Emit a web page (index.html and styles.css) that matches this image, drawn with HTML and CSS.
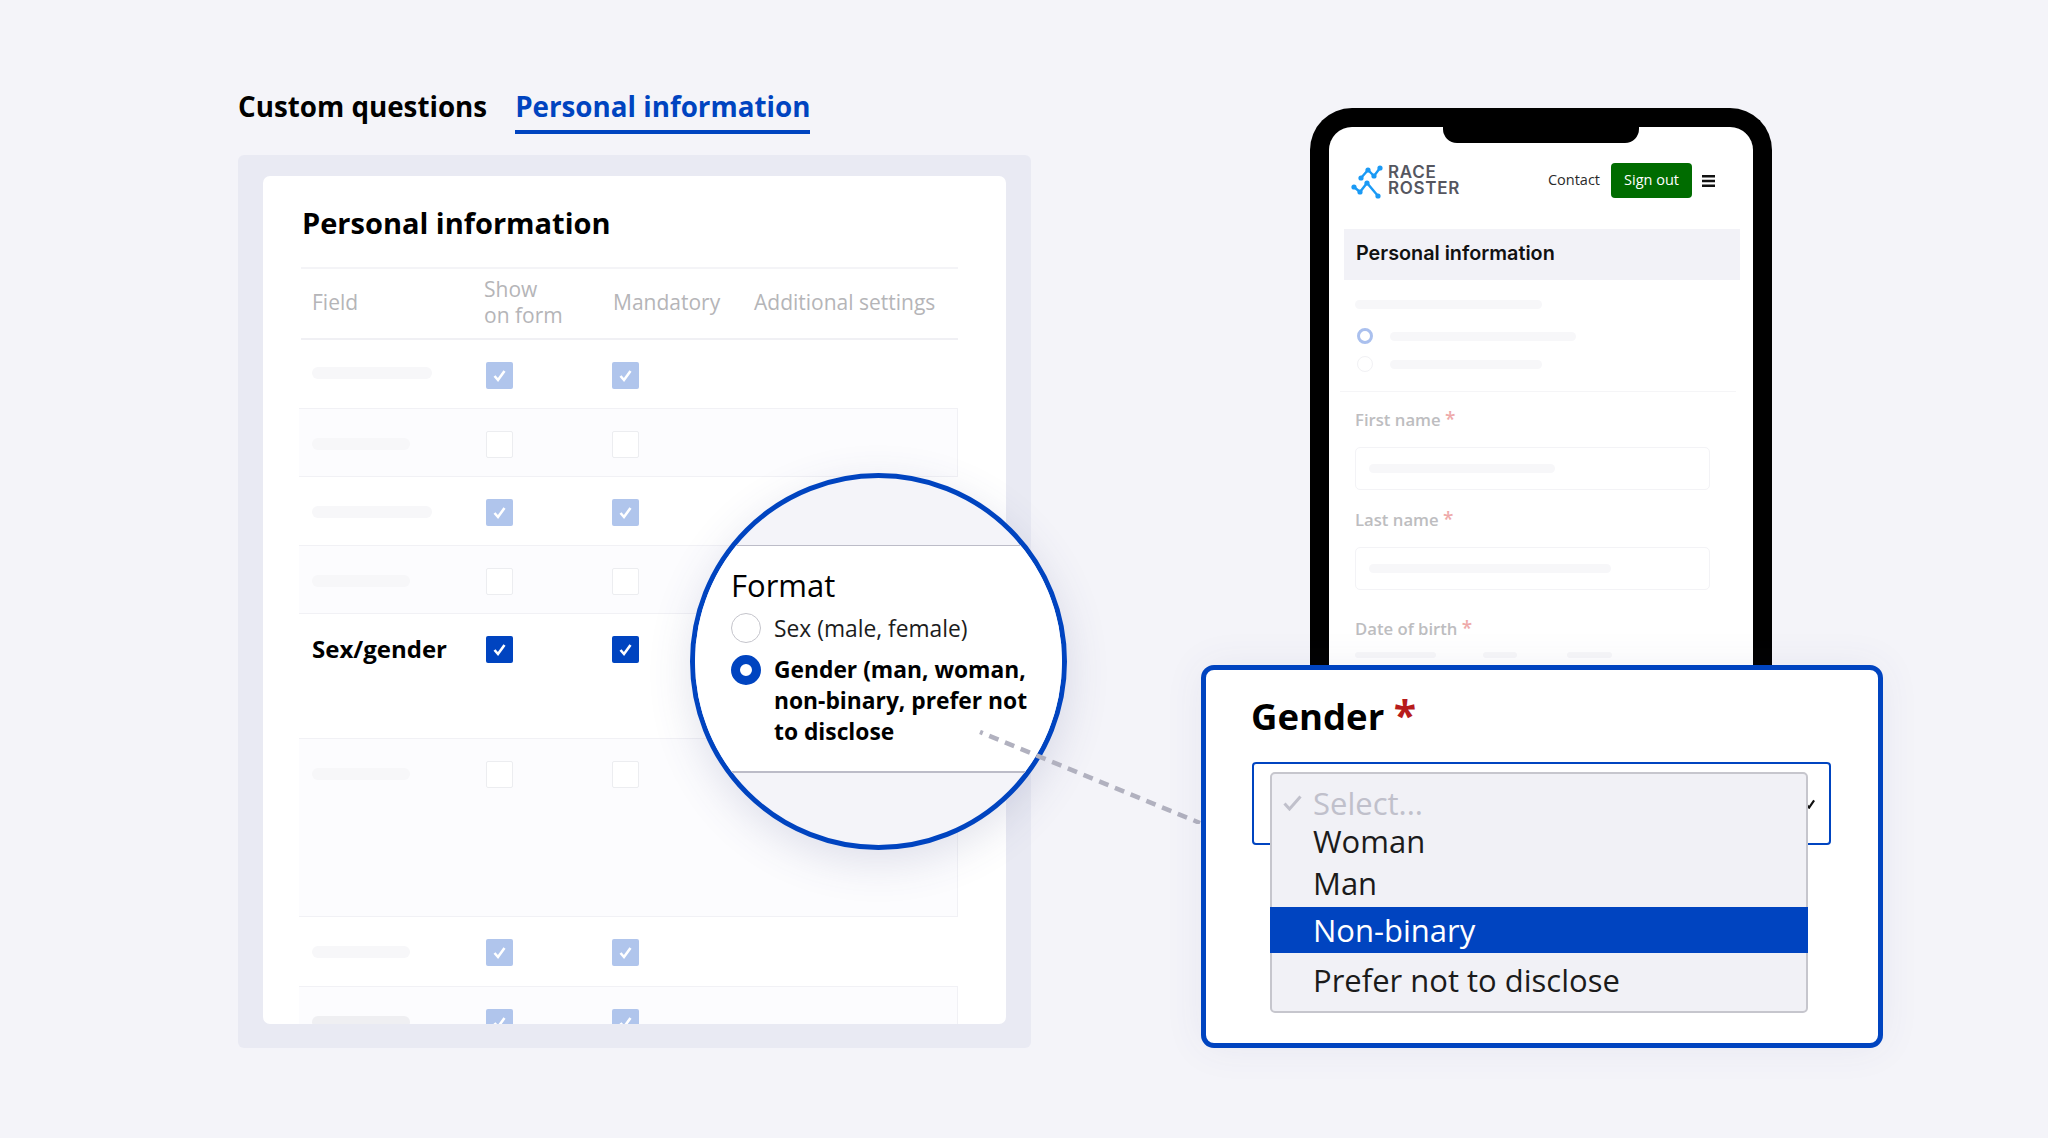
FILE: index.html
```html
<!DOCTYPE html>
<html lang="en">
<head>
    <meta charset="UTF-8">
    <title>Personal information</title>
    <link rel="stylesheet" href="styles.css">
</head>
<body>
    <div class="page">
        <!-- Left column: admin settings -->
        <div class="admin">
            <div class="tabs">
                <a class="tab">Custom questions</a>
                <a class="tab tab-active">Personal information</a>
            </div>
            <div class="panel">
                <div class="card">
                    <h2 class="card-title">Personal information</h2>
                    <div class="table">
                        <div class="head">
                            <span>Field</span>
                            <span>Show<br>on form</span>
                            <span>Mandatory</span>
                            <span>Additional settings</span>
                        </div>
                        <div class="row row-first">
                            <div class="skel skel-long skel-up"></div>
                            <span class="box box-faded"><svg viewBox="0 0 27 27"><path d="M8.5 14l3.5 4 6.5-9"/></svg></span>
                            <span class="box box-faded"><svg viewBox="0 0 27 27"><path d="M8.5 14l3.5 4 6.5-9"/></svg></span>
                        </div>
                        <div class="row row-shaded">
                            <div class="skel skel-short"></div>
                            <span class="box"></span>
                            <span class="box"></span>
                        </div>
                        <div class="row">
                            <div class="skel skel-long"></div>
                            <span class="box box-faded"><svg viewBox="0 0 27 27"><path d="M8.5 14l3.5 4 6.5-9"/></svg></span>
                            <span class="box box-faded"><svg viewBox="0 0 27 27"><path d="M8.5 14l3.5 4 6.5-9"/></svg></span>
                        </div>
                        <div class="row row-shaded">
                            <div class="skel skel-short"></div>
                            <span class="box"></span>
                            <span class="box"></span>
                        </div>
                        <div class="row row-gender">
                            <div class="row-label">Sex/gender</div>
                            <span class="box box-on"><svg viewBox="0 0 27 27"><path d="M8.5 14l3.5 4 6.5-9"/></svg></span>
                            <span class="box box-on"><svg viewBox="0 0 27 27"><path d="M8.5 14l3.5 4 6.5-9"/></svg></span>
                        </div>
                        <div class="row row-shaded row-tall">
                            <div class="skel skel-short"></div>
                            <span class="box"></span>
                            <span class="box"></span>
                        </div>
                        <div class="row row-wide">
                            <div class="skel skel-short"></div>
                            <span class="box box-faded"><svg viewBox="0 0 27 27"><path d="M8.5 14l3.5 4 6.5-9"/></svg></span>
                            <span class="box box-faded"><svg viewBox="0 0 27 27"><path d="M8.5 14l3.5 4 6.5-9"/></svg></span>
                        </div>
                        <div class="row row-shaded">
                            <div class="skel skel-short skel-dark"></div>
                            <span class="box box-faded"><svg viewBox="0 0 27 27"><path d="M8.5 14l3.5 4 6.5-9"/></svg></span>
                            <span class="box box-faded"><svg viewBox="0 0 27 27"><path d="M8.5 14l3.5 4 6.5-9"/></svg></span>
                        </div>
                    </div>
                </div>
            </div>
        </div>

        <!-- Magnifier over the table -->
        <div class="lens">
            <div class="lens-band">
                <div class="lens-title">Format</div>
                <div class="option">
                    <span class="radio"></span>
                    <span>Sex (male, female)</span>
                </div>
                <div class="option option-on">
                    <span class="radio radio-on"></span>
                    <span>Gender (man, woman,<br>non-binary, prefer not<br>to disclose</span>
                </div>
            </div>
        </div>
        <svg class="connector" viewBox="0 0 222 94"><path d="M1 2L221 93"/></svg>

        <!-- Right column: phone preview -->
        <div class="preview">
            <div class="phone">
                <div class="notch"></div>
                <div class="site-head">
                    <div class="logo">
                        <svg class="logo-mark" viewBox="0 0 32 36">
                            <path d="M10 15l7-8 6 6 6-8M3 24l6 5 7-9 11 13"/>
                            <circle cx="10" cy="15" r="2.6"/><circle cx="17" cy="7" r="2.6"/><circle cx="23" cy="13" r="2.6"/><circle cx="29" cy="5" r="2.6"/>
                            <circle cx="3" cy="24" r="2.6"/><circle cx="9" cy="29" r="2.6"/><circle cx="16" cy="20" r="2.6"/><circle cx="27" cy="33" r="2.6"/>
                        </svg>
                        <div class="logo-text">RACE<br>ROSTER</div>
                    </div>
                    <div class="site-nav">
                        <span class="contact">Contact</span>
                        <span class="signout">Sign out</span>
                        <svg class="burger" viewBox="0 0 14 12"><path d="M0 1.25h13M0 6h13M0 10.75h13"/></svg>
                    </div>
                </div>
                <div class="section-bar">Personal information</div>
                <div class="form">
                    <div class="skel skel-form skel-187"></div>
                    <div class="form-radio">
                        <span class="mini-radio mini-radio-on"></span>
                        <div class="skel skel-form skel-186"></div>
                    </div>
                    <div class="form-radio form-radio-2">
                        <span class="mini-radio"></span>
                        <div class="skel skel-form skel-152"></div>
                    </div>
                    <div class="divider"></div>
                    <div class="label">First name <span class="req">*</span></div>
                    <div class="input"><div class="skel skel-form skel-186"></div></div>
                    <div class="label label-last">Last name <span class="req">*</span></div>
                    <div class="input"><div class="skel skel-form skel-242"></div></div>
                    <div class="label label-dob">Date of birth <span class="req">*</span></div>
                    <div class="dob">
                        <div class="skel skel-dob skel-81"></div>
                        <div class="skel skel-dob skel-34"></div>
                        <div class="skel skel-dob skel-45"></div>
                    </div>
                </div>
            </div>

            <div class="gender-card">
                <div class="gender-label">Gender <span class="gender-req">*</span></div>
                <div class="select">
                    <svg class="chevron" viewBox="0 0 10 10"><path d="M1 6l2.5 3L9 1"/></svg>
                    <div class="popup">
                        <div class="popup-item popup-placeholder">
                            <svg class="popup-check" viewBox="0 0 19 16"><path d="M1.5 8.5l5 5.5L17.5 1.5"/></svg>
                            <span>Select...</span>
                        </div>
                        <div class="popup-item popup-woman">Woman</div>
                        <div class="popup-item popup-man">Man</div>
                        <div class="popup-item popup-selected">Non-binary</div>
                        <div class="popup-item popup-last">Prefer not to disclose</div>
                    </div>
                </div>
            </div>
        </div>
    </div>
</body>
</html>
```

FILE: styles.css
```css
/* Global */
* {
    box-sizing: border-box;
}

body {
    margin: 0;
    background: #f4f4f9;
    font-family: "Open Sans", sans-serif;
    color: #000;
}

.page {
    position: relative;
    display: flex;
    align-items: flex-start;
    gap: 170px;
    height: 1138px;
    padding-left: 238px;
    overflow: hidden;
}

/* Tabs */
.admin {
    width: 793px;
    margin-top: 86px;
}

.tabs {
    display: flex;
    gap: 28px;
}

.tab {
    height: 48px;
    padding-bottom: 4px;
    font-size: 27.75px;
    font-weight: 700;
    line-height: 40px;
}

.tab-active {
    color: #0044c0;
    border-bottom: 4px solid #0044c0;
}

/* Panel and card */
.panel {
    margin-top: 21px;
    padding: 21px 25px 24px;
    background: #e9eaf3;
    border-radius: 6px;
}

.card {
    height: 848px;
    overflow: hidden;
    background: #fff;
    border-radius: 7px;
}

.card-title {
    margin: 0;
    padding: 27px 0 24px 39px;
    font-size: 29px;
    font-weight: 700;
    line-height: 40px;
}

/* Table */
.table {
    width: 659px;
    margin-left: 36px;
}

.head {
    display: grid;
    grid-template-columns: 172px 129px 141px 1fr;
    align-items: center;
    height: 73px;
    margin-left: 2px;
    padding: 0 0 3px 11px;
    border-top: 2px solid #f4f4f7;
    border-bottom: 2px solid #f0f0f4;
    font-size: 21px;
    line-height: 26px;
    color: #b5b5b8;
}

.row {
    display: grid;
    grid-template-columns: 174px 125.5px 1fr;
    align-items: start;
    height: 68.5px;
    padding: 22px 0 0 13px;
    border-top: 1.5px solid #f1f1f5;
}

.row-first {
    height: 67.5px;
    border-top: 0;
}

.row-shaded {
    background: #fcfcfe;
    border-right: 1.5px solid #f1f1f5;
}

.row-gender {
    height: 125px;
}

.row-tall {
    height: 178px;
}

.row-wide {
    height: 70px;
}

.row-label {
    margin-top: -6px;
    font-size: 24px;
    font-weight: 700;
    line-height: 38px;
}

/* Placeholder bars */
.skel {
    border-radius: 6px;
    background: #f7f7f9;
}

.skel-long {
    width: 120px;
    height: 12px;
    margin-top: 7px;
}

.skel-short {
    width: 98px;
    height: 12px;
    margin-top: 7px;
}

.skel-up {
    margin-top: 5px;
}

.skel-dark {
    background: #efeff2;
}

/* Checkboxes */
.box {
    display: block;
    width: 27px;
    height: 27px;
    background: #fff;
    border: 1.5px solid #ecedf0;
    border-radius: 2px;
}

.box svg {
    display: block;
    width: 27px;
    height: 27px;
    margin: 0;
    fill: none;
    stroke: #fff;
    stroke-width: 2.6;
}

.box-faded {
    background: #b0c5ec;
    border: 0;
}

.box-on {
    background: #0044c0;
    border: 0;
}

/* Magnifier */
.lens {
    position: absolute;
    left: 690px;
    top: 473px;
    width: 377px;
    height: 377px;
    overflow: hidden;
    background: #f4f4f9;
    border: 5px solid #0044c0;
    border-radius: 50%;
    box-shadow: 0 12px 44px rgba(70, 75, 130, 0.16);
}

.lens-band {
    height: 228px;
    margin-top: 67px;
    padding: 19px 0 0 36px;
    background: #fff;
    border-top: 1.5px solid #bcbcc8;
    border-bottom: 2px solid #bcbcc8;
}

.lens-title {
    font-size: 31px;
    font-weight: 500;
    line-height: 40px;
    margin-bottom: 8px;
}

.option {
    display: flex;
    gap: 13px;
    margin-bottom: 10px;
    font-size: 22.8px;
    line-height: 31px;
    color: #1c1c1c;
}

.option-on {
    font-weight: 700;
    color: #000;
}

.radio {
    flex: none;
    width: 30px;
    height: 30px;
    background: #fff;
    border: 1.5px solid #c4c4cb;
    border-radius: 50%;
}

.radio-on {
    margin-top: 1px;
    border: 9px solid #0044c0;
}

.connector {
    position: absolute;
    left: 979px;
    top: 730px;
    width: 222px;
    height: 94px;
}

.connector path {
    fill: none;
    stroke: #b1b1bf;
    stroke-width: 4.5;
    stroke-dasharray: 10 7;
    stroke-dashoffset: 7;
}

/* Phone */
.preview {
    width: 682px;
    margin-top: 108px;
}

.phone {
    position: relative;
    width: 462px;
    height: 562px;
    margin-left: 109px;
    overflow: hidden;
    background: #fff;
    border: 19px solid #000;
    border-bottom: 0;
    border-radius: 42px 42px 0 0;
}

.notch {
    position: absolute;
    left: 114px;
    top: 0;
    width: 196px;
    height: 16px;
    background: #000;
    border-radius: 0 0 14px 14px;
}

.site-head {
    display: flex;
    justify-content: space-between;
    align-items: center;
    height: 35px;
    margin-top: 36px;
    padding: 0 37px 0 22px;
}

.logo {
    display: flex;
    align-items: center;
    gap: 5px;
}

.logo-mark {
    width: 32px;
    height: 36px;
    fill: #1a9af5;
}

.logo-mark path {
    fill: none;
    stroke: #1a9af5;
    stroke-width: 2.4;
}

.logo-text {
    margin-top: -2px;
    font-family: Inter, sans-serif;
    font-size: 17px;
    font-weight: 600;
    line-height: 16px;
    letter-spacing: 0.7px;
    color: #55565f;
}

.site-nav {
    display: flex;
    align-items: center;
}

.contact {
    margin-right: 11px;
    margin-top: -2px;
    font-size: 14.5px;
    color: #2a2a2a;
}

.signout {
    width: 81px;
    height: 35px;
    background: #006c00;
    border-radius: 4px;
    font-size: 14.5px;
    line-height: 33px;
    text-align: center;
    color: #fff;
}

.burger {
    width: 14px;
    height: 12px;
    margin-left: 10px;
    fill: none;
    stroke: #111;
    stroke-width: 2.3;
}

.section-bar {
    width: 396px;
    height: 51px;
    margin: 31px 0 0 15px;
    padding-left: 12px;
    background: #f2f2f7;
    font-family: Inter, sans-serif;
    font-size: 19.8px;
    font-weight: 600;
    line-height: 48px;
    color: #111;
}

/* Faded form inside the phone */
.form {
    padding: 20px 0 0 26px;
}

.skel-form {
    height: 9px;
    border-radius: 5px;
}

.skel-187 { width: 187px; }
.skel-186 { width: 186px; }
.skel-152 { width: 152px; }
.skel-242 { width: 242px; }

.form-radio {
    display: flex;
    align-items: center;
    gap: 17px;
    margin: 19px 0 0 2px;
}

.form-radio-2 {
    margin-top: 12px;
}

.mini-radio {
    width: 16px;
    height: 16px;
    border: 1.5px solid #f1f1f4;
    border-radius: 50%;
}

.mini-radio-on {
    border: 3px solid #aac0ee;
}

.divider {
    width: 396px;
    height: 1px;
    margin: 19px 0 0 -15px;
    background: #f5f5f7;
}

.label {
    height: 22px;
    margin-top: 17px;
    font-size: 16.7px;
    font-weight: 600;
    line-height: 22px;
    color: #bdbdc0;
}

.label-last {
    margin-top: 19px;
}

.label-dob {
    margin-top: 28px;
}

.req {
    font-size: 19px;
    line-height: 0;
    color: #eeaaaa;
}

.input {
    display: flex;
    align-items: center;
    width: 355px;
    height: 43px;
    margin-top: 16px;
    padding-left: 13px;
    border: 1.5px solid #f3f3f6;
    border-radius: 5px;
}

.dob {
    display: flex;
    margin-top: 12px;
}

.skel-dob {
    height: 6px;
    border-radius: 3px;
}

.skel-81 { width: 81px; margin-right: 47px; }
.skel-34 { width: 34px; margin-right: 50px; }
.skel-45 { width: 45px; }

/* Gender card */
.gender-card {
    position: relative;
    z-index: 2;
    height: 383px;
    margin-top: -5px;
    padding: 21px 0 0 46px;
    background: #fff;
    border: 5px solid #0044c0;
    border-radius: 13px;
    box-shadow: 0 0 40px rgba(70, 75, 130, 0.07);
}

.gender-label {
    height: 50px;
    margin-left: -1px;
    font-size: 36.5px;
    font-weight: 700;
    line-height: 50px;
}

.gender-req {
    font-size: 41px;
    line-height: 0;
    color: #b71c1c;
}

.select {
    position: relative;
    display: flex;
    justify-content: flex-end;
    align-items: center;
    width: 579px;
    height: 83px;
    margin-top: 21px;
    padding-right: 14px;
    border: 2px solid #0044c0;
    border-radius: 4px;
}

.chevron {
    width: 9px;
    height: 10px;
    fill: none;
    stroke: #111;
    stroke-width: 2.4;
}

.popup {
    position: absolute;
    left: 16px;
    top: 8px;
    width: 538px;
    height: 241px;
    padding-top: 8.5px;
    background: #f1f1f6;
    border: 2px solid #c6c6cd;
    border-radius: 5px;
}

.popup-item {
    padding-left: 41px;
    font-size: 31px;
    line-height: 40px;
    color: #1b1b1b;
}

.popup-placeholder {
    display: flex;
    align-items: center;
    gap: 11px;
    padding-left: 11px;
    color: #c0c0cb;
}

.popup-check {
    width: 19px;
    height: 16px;
    fill: none;
    stroke: #c0c0cb;
    stroke-width: 3;
}

.popup-woman {
    margin-top: -2px;
}

.popup-man {
    margin-top: 2px;
}

.popup-selected {
    height: 46px;
    margin: 4.5px -2px 0;
    padding-left: 43px;
    background: #0044c0;
    line-height: 46px;
    color: #fff;
}

.popup-last {
    margin-top: 7px;
}
```
